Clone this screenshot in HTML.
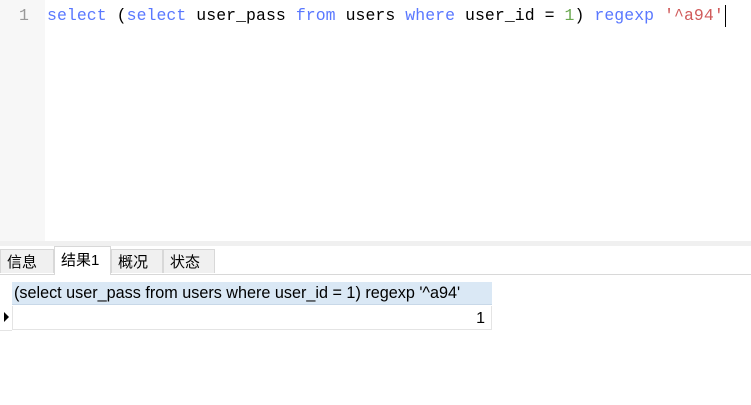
<!DOCTYPE html>
<html><head><style>
body{margin:0;width:751px;height:405px;background:#fff;position:relative;overflow:hidden;font-family:"Liberation Sans","Noto Sans CJK SC",sans-serif}
.gut{position:absolute;left:0;top:0;width:45px;height:241px;background:#f7f7f7}
.ln{position:absolute;left:19px;top:6px;font:16.5px "Liberation Mono",monospace;color:#999}
.code{position:absolute;left:47px;top:6px;font:16.5px "Liberation Mono",monospace;color:#000;white-space:pre;letter-spacing:0.05px}
.k{color:#5a78ff}.n{color:#6aa84f}.s{color:#d05a5a}
.cur{position:absolute;left:725px;top:5px;width:1px;height:22px;background:#000}
.bar{position:absolute;left:0;top:241px;width:751px;height:5px;background:#f0f0f0}
.tabs{position:absolute;left:0;top:246px;width:751px;height:28px;border-bottom:1px solid #d8d8d8}
.tab{position:absolute;top:3px;height:24px;background:#f0f0f0;border:1px solid #d8d8d8;border-bottom:none;font-size:15px;line-height:26px;padding-left:6px;box-sizing:border-box}
.tab.a{background:#fff;top:0;height:29px;line-height:28px}
.hd{position:absolute;left:12px;top:282px;width:480px;height:23px;background:#dae8f5;border-bottom:1px solid #c8d8e8;font-size:16.2px;line-height:23px;padding-left:2px;box-sizing:border-box;white-space:nowrap}
.row{position:absolute;left:12px;top:306px;width:480px;height:24px;border:1px solid #e4e4e4;border-top:none;font-size:16px;line-height:26px;text-align:right;padding-right:6px;box-sizing:border-box}
.arr{position:absolute;left:4px;top:312px;width:0;height:0;border-top:5px solid transparent;border-bottom:5px solid transparent;border-left:5px solid #000}
.lg{position:absolute;left:0;top:306px;width:12px;height:24px;border-bottom:1px solid #e4e4e4}
</style></head><body>
<div class="gut"></div>
<div class="ln">1</div>
<div class="code"><span class="k">select</span> (<span class="k">select</span> user_pass <span class="k">from</span> users <span class="k">where</span> user_id = <span class="n">1</span>) <span class="k">regexp</span> <span class="s">'^a94'</span></div>
<div class="cur"></div>
<div class="bar"></div>
<div class="tabs">
<div class="tab" style="left:0;width:54px">信息</div>
<div class="tab a" style="left:54px;width:57px">结果1</div>
<div class="tab" style="left:111px;width:52px">概况</div>
<div class="tab" style="left:163px;width:52px">状态</div>
</div>
<div class="hd">(select user_pass from users where user_id = 1) regexp '^a94'</div>
<div class="lg"></div>
<div class="arr"></div>
<div class="row">1</div>
</body></html>
